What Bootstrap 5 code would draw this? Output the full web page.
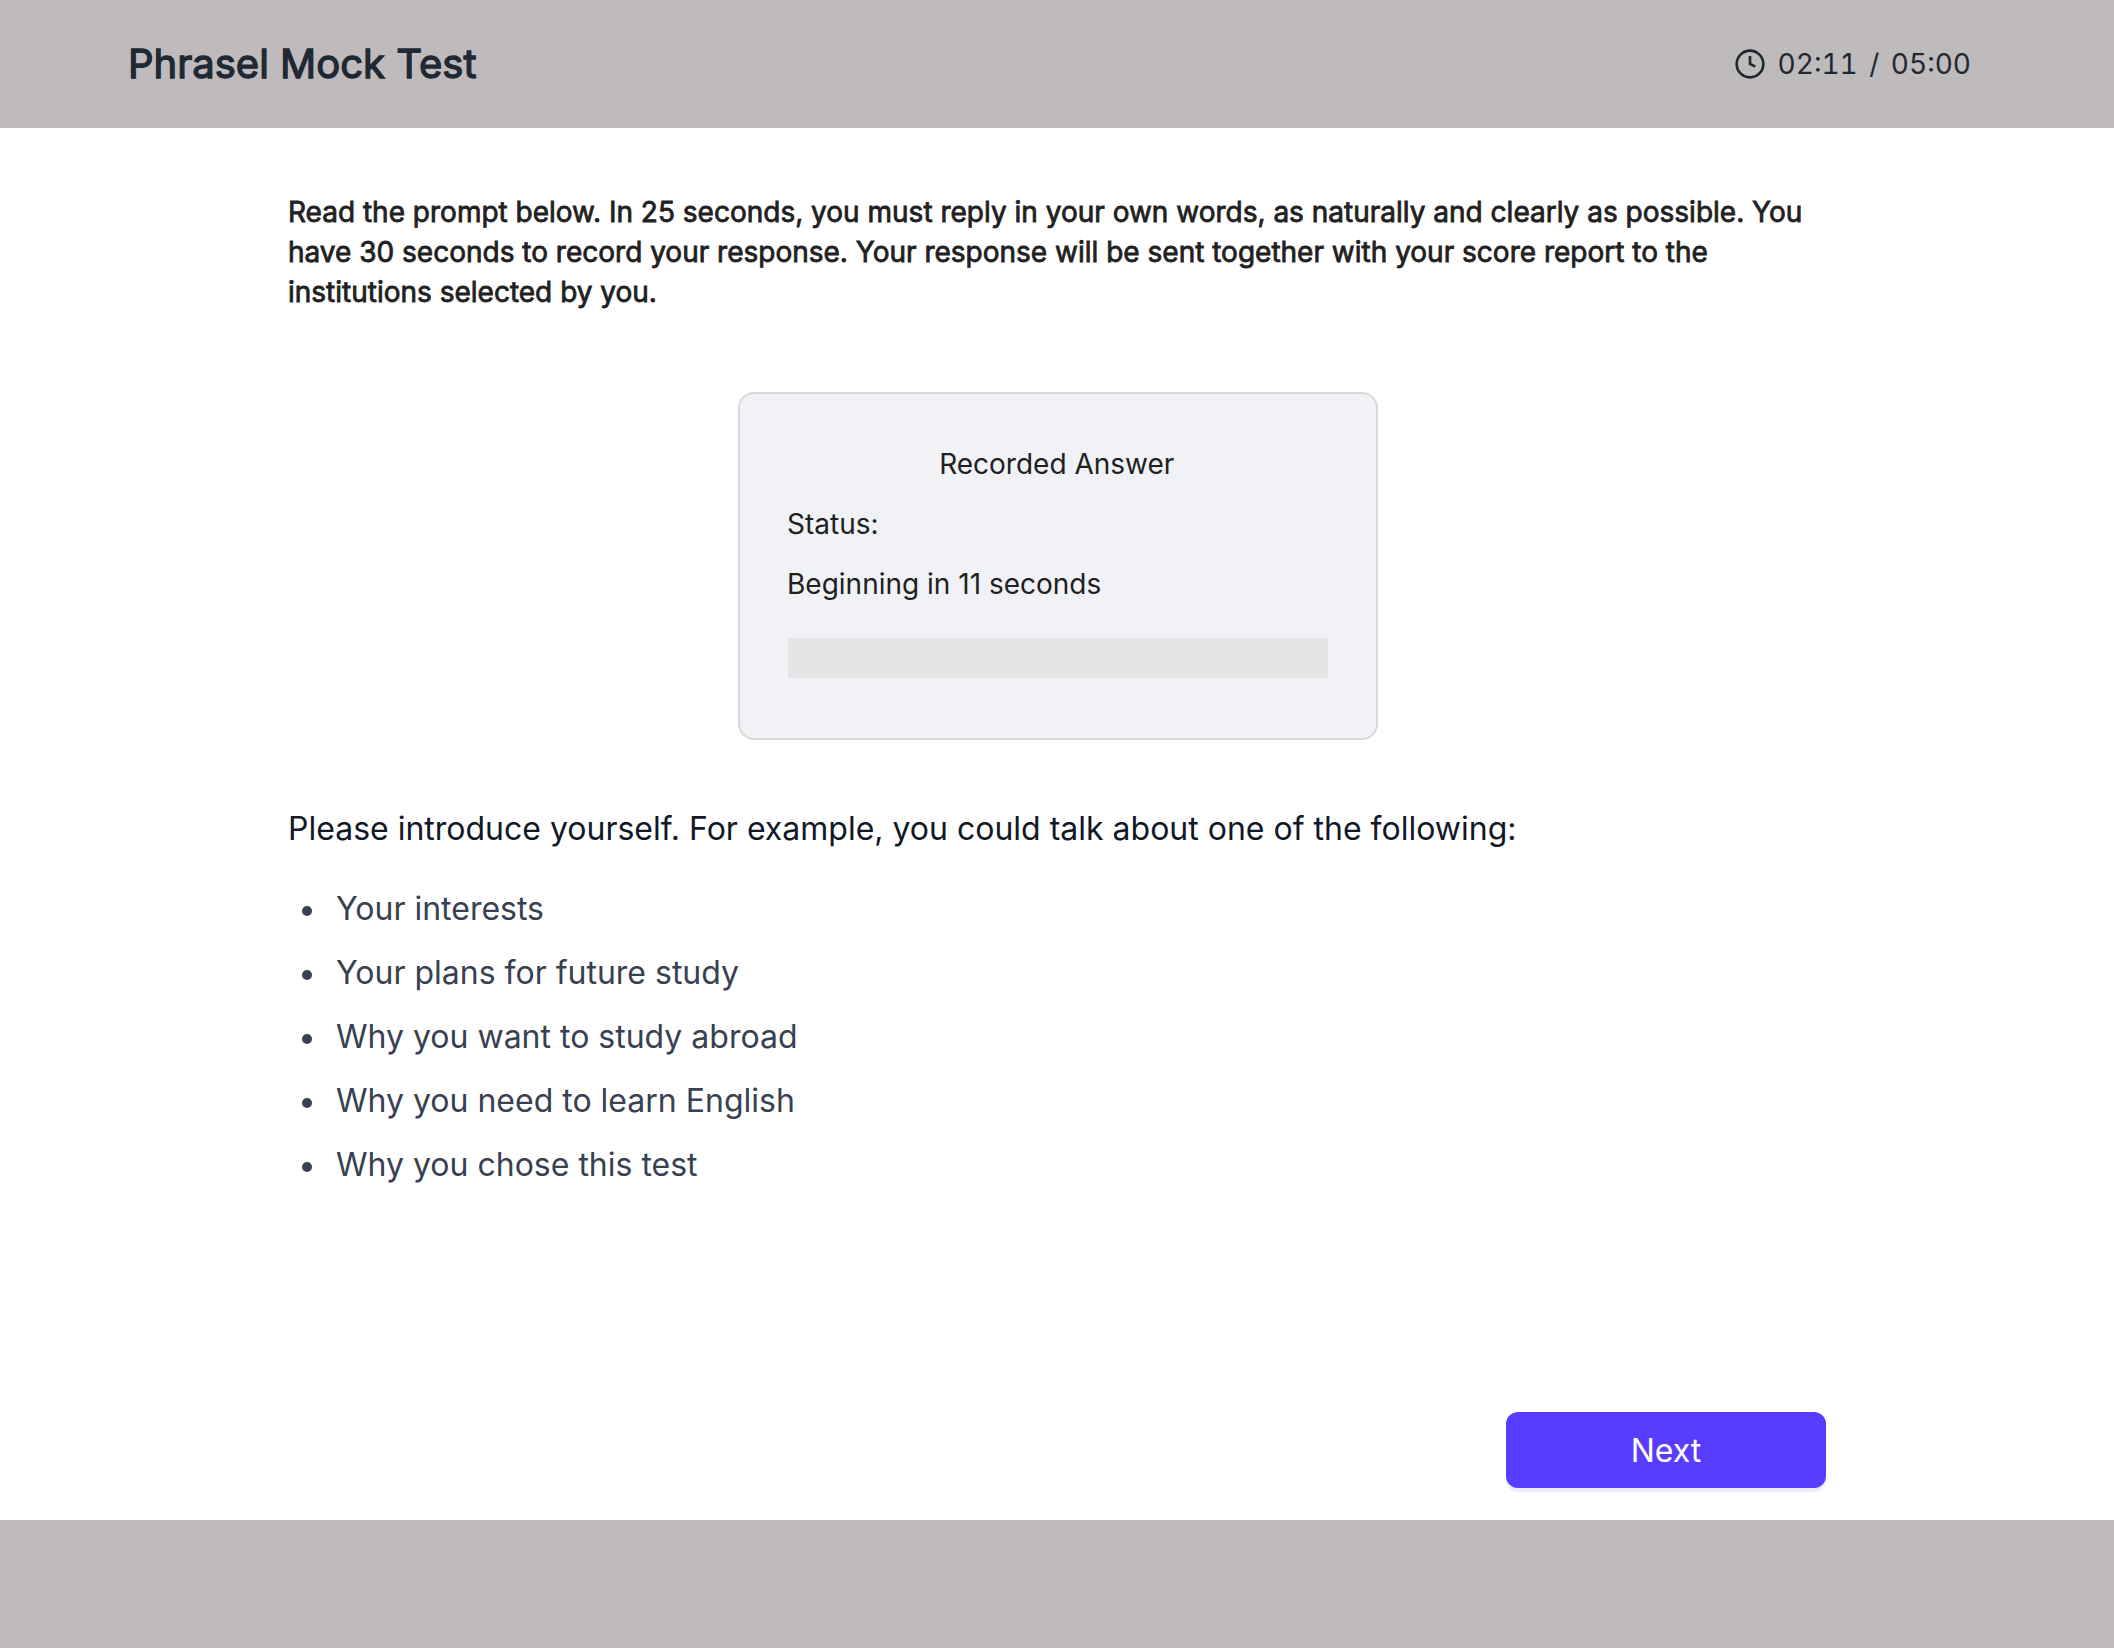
<!DOCTYPE html>
<html lang="en">
<head>
  <title>Phrasel Mock Test</title>
  <meta charset="UTF-8">
  <link href="https://cdn.jsdelivr.net/npm/bootstrap@5.3.0/dist/css/bootstrap.min.css" rel="stylesheet">
  <script src="https://cdn.jsdelivr.net/npm/bootstrap@5.3.0/dist/js/bootstrap.bundle.min.js"></script>
  <style>
    body {
      font-family: Inter, "Liberation Sans", sans-serif;
      font-size: 28px;
      line-height: 40px;
      color: #212121;
    }
    .test-bar {
      height: 128px;
      padding: 0 143px 0 128px;
      background: #bfbbbc;
      color: #1f2933;
    }
    .test-title {
      font-size: 40px;
      line-height: 56px;
      font-weight: 400;
      -webkit-text-stroke: 1.3px currentColor;
    }
    .test-timer {
      font-variant-numeric: tabular-nums;
      gap: 12px;
    }
    .test-timer .clock-text {
      word-spacing: 4px;
    }
    .test-body {
      padding: 64px 288px 32px;
    }
    .instructions {
      margin-bottom: 80px;
      -webkit-text-stroke: .8px currentColor;
    }
    .recorder {
      width: 640px;
      height: 348px;
      margin-left: 1px;
      padding: 50px 48px;
      border: 2px solid #d8dada;
      border-radius: 16px;
      background: #f0f2f6;
    }
    .recorder p {
      margin: 0 1px 20px -.5px;
    }
    .recorder .progress {
      height: 40px;
      margin-top: 34px;
      background: #e4e5e7;
    }
    .prompt {
      margin: 69px 0 40px;
      font-size: 32px;
      color: #111827;
    }
    .topics {
      padding-left: 14px;
      font-size: 32px;
      color: #374151;
    }
    .topics li {
      margin-bottom: 24px;
    }
    .topics li::before {
      content: "";
      width: 10px;
      height: 10px;
      margin: 4px 24px 0 0;
      border-radius: 50%;
      background: currentColor;
    }
    .btn-next {
      --bs-btn-color: #fff;
      --bs-btn-bg: #583cff;
      --bs-btn-hover-color: #fff;
      --bs-btn-hover-bg: #482ceb;
      width: 320px;
      height: 76px;
      padding-top: 8px;
      border: 0;
      border-radius: 12px;
      font-size: 32px;
      box-shadow: 0 4px 0 #eeebff;
    }
  </style>
</head>
<body class="d-flex flex-column vh-100 bg-white overflow-hidden">

<header class="test-bar d-flex align-items-center justify-content-between flex-shrink-0">
  <h1 class="test-title m-0">Phrasel Mock Test</h1>
  <div class="test-timer d-flex align-items-center">
    <svg width="32" height="32" viewBox="0 0 24 24" fill="none" stroke="currentColor" stroke-width="2">
      <circle cx="12" cy="12" r="10"/>
      <path d="M12 6v6l4 2"/>
    </svg>
    <span class="clock-text">02:11 / 05:00</span>
  </div>
</header>

<main class="test-body d-flex flex-column flex-grow-1">
  <p class="instructions">Read the prompt below. In 25 seconds, you must reply in your own words, as naturally and clearly as possible. You have 30 seconds to record your response. Your response will be sent together with your score report to the institutions selected by you.</p>

  <div class="recorder align-self-center">
    <p class="text-center">Recorded Answer</p>
    <p>Status:</p>
    <p id="status">Beginning in 11 seconds</p>
    <div class="progress rounded-0"></div>
  </div>

  <p class="prompt">Please introduce yourself. For example, you could talk about one of the following:</p>
  <ul class="topics list-unstyled mb-0">
    <li class="d-flex align-items-center">Your interests</li>
    <li class="d-flex align-items-center">Your plans for future study</li>
    <li class="d-flex align-items-center">Why you want to study abroad</li>
    <li class="d-flex align-items-center">Why you need to learn English</li>
    <li class="d-flex align-items-center">Why you chose this test</li>
  </ul>

  <button type="button" class="btn btn-next mt-auto align-self-end">Next</button>
</main>

<footer class="test-bar flex-shrink-0"></footer>

</body>
</html>
